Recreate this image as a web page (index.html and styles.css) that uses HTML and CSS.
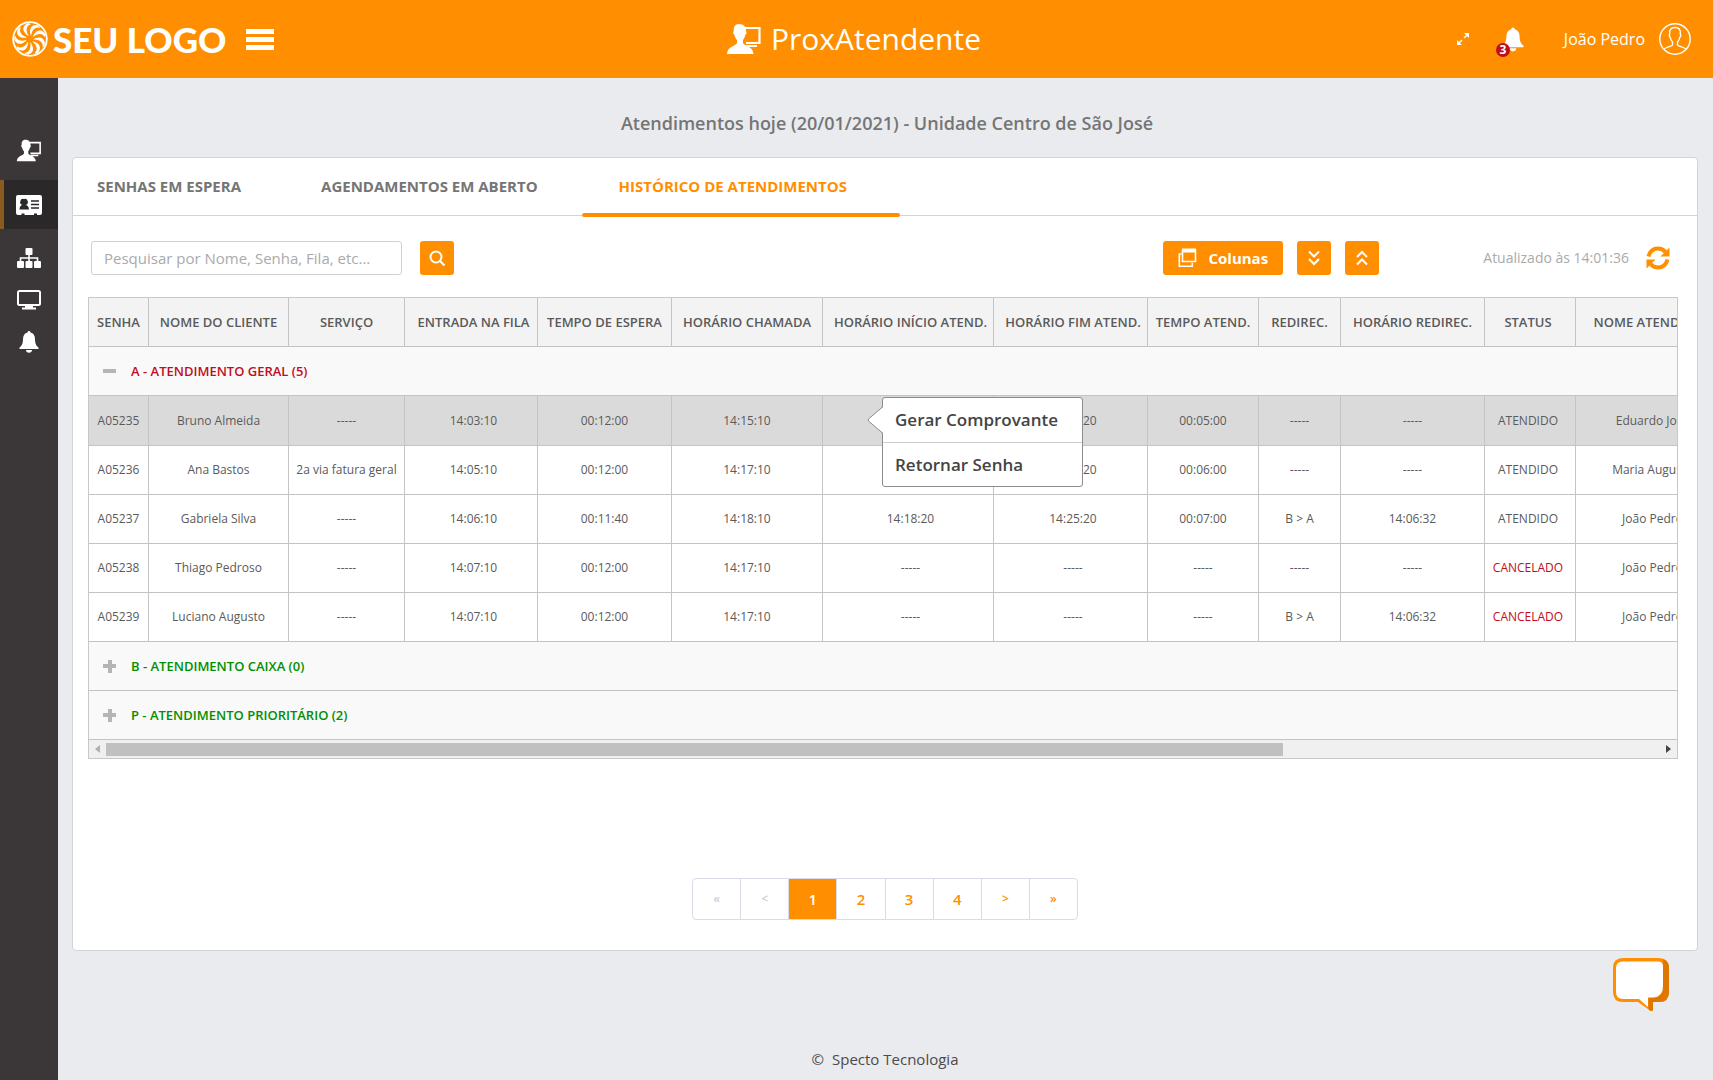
FILE: index.html
```html
<!DOCTYPE html>
<html lang="pt-BR">
<head>
<meta charset="utf-8">
<title>ProxAtendente</title>
<link rel="stylesheet" href="styles.css">
</head>
<body>
<svg class="defs" width="0" height="0" aria-hidden="true">
  <symbol id="agent" viewBox="0 0 36 32">
    <path d="M19 5h14.500v15H20" fill="none" stroke="currentColor" stroke-width="2.200"/>
    <path d="M20 22h11v2H22zM13 1c5 0 7 3 7 7 1 1 .6 3.500-.8 4-.5 3-1.700 4-2.200 5v3c1 3 10 3 10.500 11H1c.5-8 9-8 10-11v-3c-1-1-2-2.500-2.500-5-1.300-.5-1.700-3-.7-4C7.500 4 9 1 13 1z" fill="currentColor"/>
  </symbol>
  <symbol id="bell" viewBox="0 0 20 22">
    <path d="M10 0c.9 0 1.500.7 1.500 1.600C14.500 2.300 16 5 16 8c0 5 1.500 7 3.500 8.500V18H.5v-1.500C2.500 15 4 13 4 8c0-3 1.500-5.700 4.500-6.400C8.500.7 9.100 0 10 0zM7 19h6c0 1.700-1.300 2.800-3 2.800S7 20.700 7 19z" fill="currentColor"/>
  </symbol>
</svg>

<header class="topbar">
  <div class="brand">
    <svg class="brand-mark" viewBox="-18 -18 36 36" aria-hidden="true">
      <circle r="16.800" fill="none" stroke="#fff" stroke-width="1.800"/>
      <g fill="#fff">
        <path id="b" d="M1-3C-1-8 0-14 6-14 9-14 10-12 10-11 6-12.500 2-10 1-3z"/>
        <use href="#b" transform="rotate(40)"/><use href="#b" transform="rotate(80)"/><use href="#b" transform="rotate(120)"/><use href="#b" transform="rotate(160)"/><use href="#b" transform="rotate(200)"/><use href="#b" transform="rotate(240)"/><use href="#b" transform="rotate(280)"/><use href="#b" transform="rotate(320)"/>
      </g>
    </svg>
    <span class="brand-name">SEU LOGO</span>
    <button class="menu-btn" aria-label="Menu"><span></span><span></span><span></span></button>
  </div>
  <div class="product">
    <svg class="product-icon" aria-hidden="true"><use href="#agent"/></svg>
    <span>ProxAtendente</span>
  </div>
  <div class="user-area">
    <button class="icon-btn expand" aria-label="Tela cheia">
      <svg width="14" height="14" viewBox="0 0 14 14" aria-hidden="true"><path d="M8 1h5v5zM1 8v5h5z" fill="#fff"/><path d="M11 3 8 6M6 8l-3 3" stroke="#fff" stroke-width="1.600"/></svg>
    </button>
    <button class="icon-btn alerts" aria-label="Notificações">
      <svg width="22" height="25" aria-hidden="true"><use href="#bell"/></svg>
      <span class="badge">3</span>
    </button>
    <a class="user" href="#">
      <span>João Pedro</span>
      <svg width="32" height="32" viewBox="0 0 32 32" fill="none" stroke="#fff" stroke-width="1.400" aria-hidden="true"><circle cx="16" cy="16" r="15.200"/><path d="M5 26.500c1-2.500 7-2.500 8.500-4.500v-3c-1.500-1.500-2-3-2.200-4.500-1-.5-1.300-2.500-.6-3.500C10 7 12 4.500 16 4.500S22 7 21.300 11c.7 1 .4 3-.6 3.500-.2 1.500-.7 3-2.200 4.500v3c1.500 2 7.500 2 8.500 4.500"/></svg>
    </a>
  </div>
</header>

<div class="shell">
  <nav class="sidebar" aria-label="Principal">
    <a href="#" class="side-link first" aria-label="Atendente"><svg width="26" height="23" aria-hidden="true"><use href="#agent"/></svg></a>
    <a href="#" class="side-link active" aria-label="Atendimentos">
      <svg width="28" height="22" viewBox="0 0 28 22" aria-hidden="true"><path d="M3 1h22a2 2 0 0 1 2 2v16a2 2 0 0 1-2 2h-3v-1.500h-3V21H9.500v-1.500h-3V21H3a2 2 0 0 1-2-2V3a2 2 0 0 1 2-2z" fill="#fff"/><path d="M4.500 15.500c0-3 1.500-4.500 3-4.500A3 3 0 0 1 9 5a3 3 0 0 1 1.500 6c1.700 0 3.500 1.500 3.500 4.500z" fill="#2a2829"/><path d="M16 7h8M16 10.500h8M16 14h8" stroke="#2a2829" stroke-width="1.500"/></svg>
    </a>
    <a href="#" class="side-link spaced" aria-label="Filas">
      <svg width="26" height="22" viewBox="0 0 26 22" aria-hidden="true"><g fill="#fff"><rect x="9.500" y="1" width="7" height="7" rx="1"/><rect x="1" y="14" width="7" height="7" rx="1"/><rect x="9.500" y="14" width="7" height="7" rx="1"/><rect x="18" y="14" width="7" height="7" rx="1"/></g><path d="M13 7v8M4.500 15v-4h17v4" fill="none" stroke="#fff" stroke-width="1.600"/></svg>
    </a>
    <a href="#" class="side-link" aria-label="Painel">
      <svg width="26" height="22" viewBox="0 0 26 22" aria-hidden="true"><rect x="2" y="2" width="22" height="14" rx="1.500" fill="none" stroke="#fff" stroke-width="2"/><path d="M9 17h8v1.500h3v2H6v-2h3z" fill="#fff"/></svg>
    </a>
    <a href="#" class="side-link" aria-label="Alertas"><svg width="20" height="22" aria-hidden="true"><use href="#bell"/></svg></a>
  </nav>

  <main class="main">
    <h1 class="title">Atendimentos hoje (20/01/2021) - Unidade Centro de São José</h1>

    <section class="card">
      <div class="tabs">
        <a href="#" class="tab">SENHAS EM ESPERA</a>
        <a href="#" class="tab">AGENDAMENTOS EM ABERTO</a>
        <a href="#" class="tab selected" aria-current="page">HISTÓRICO DE ATENDIMENTOS</a>
      </div>

      <div class="toolbar">
        <input class="search" type="text" aria-label="Pesquisar" placeholder="Pesquisar por Nome, Senha, Fila, etc...">
        <button class="btn square" aria-label="Buscar"><svg width="18" height="18" viewBox="0 0 18 18" fill="none" stroke="#fff" stroke-width="2" aria-hidden="true"><circle cx="8" cy="8" r="5.500"/><path d="m12 12 4.500 4.500"/></svg></button>
        <div class="actions">
          <button class="btn columns"><svg width="19" height="20" viewBox="0 0 19 20" fill="none" stroke="#fff" aria-hidden="true"><path d="M4.500 2.500h13v11h-13z" stroke-width="1.600"/><path d="M4 2.500h14" stroke-width="4"/><path d="M3.500 6H1.300v12.300h13V15" stroke-width="1.600"/></svg><span>Colunas</span></button>
          <button class="btn square" aria-label="Expandir tudo"><svg width="14" height="16" viewBox="0 0 14 16" fill="none" stroke="#fff" stroke-width="2" aria-hidden="true"><path d="m2 1.500 5 5 5-5M2 9l5 5 5-5"/></svg></button>
          <button class="btn square" aria-label="Recolher tudo"><svg width="14" height="16" viewBox="0 0 14 16" fill="none" stroke="#fff" stroke-width="2" aria-hidden="true"><path d="m2 7 5-5 5 5M2 14.500l5-5 5 5"/></svg></button>
        </div>
        <div class="updated">
          <span>Atualizado às 14:01:36</span>
          <button class="icon-btn" aria-label="Atualizar"><svg width="24" height="24" viewBox="0 0 24 24" aria-hidden="true"><path d="M2.500 10.500C4 4.500 8 2.500 12 2.500c3 0 5.500 1.200 7.500 3.500M21.500 13.500C20 19.500 16 21.500 12 21.500c-3 0-5.500-1.200-7.500-3.500" fill="none" stroke="#ff8f00" stroke-width="4"/><path d="M23.500 1.500v9h-9zM.5 22.500v-9h9z" fill="#ff8f00"/></svg></button>
        </div>
      </div>

      <div class="grid">
        <div class="grid-view">
          <table class="table">
            <colgroup><col class="c-senha"><col class="c-nome"><col class="c-serv"><col class="c-entr"><col class="c-esp"><col class="c-cham"><col class="c-ini"><col class="c-fim"><col class="c-tempo"><col class="c-red"><col class="c-hred"><col class="c-stat"><col class="c-atd"></colgroup>
            <thead>
              <tr><th>SENHA</th><th>NOME DO CLIENTE</th><th>SERVIÇO</th><th>ENTRADA NA FILA</th><th>TEMPO DE ESPERA</th><th>HORÁRIO CHAMADA</th><th>HORÁRIO INÍCIO ATEND.</th><th>HORÁRIO FIM ATEND.</th><th>TEMPO ATEND.</th><th>REDIREC.</th><th>HORÁRIO REDIREC.</th><th>STATUS</th><th>NOME ATENDENTE</th></tr>
            </thead>
            <tbody>
              <tr class="group"><td colspan="13"><button class="group-btn open"><i class="sign minus"></i>A - ATENDIMENTO GERAL (5)</button></td></tr>
              <tr class="current"><td>A05235</td><td>Bruno Almeida</td><td>-----</td><td>14:03:10</td><td>00:12:00</td><td>14:15:10</td>
                <td class="anchor">14:15:20
                  <div class="popup" role="menu">
                    <svg class="popup-arrow" width="17" height="30" viewBox="0 0 17 30" aria-hidden="true"><path d="M16 1v1L1.500 14 Q.8 15 1.500 16L16 28v1z" fill="#fff"/><path d="M16 1.500 1.500 14Q.8 15 1.500 16L16 28.500" fill="none" stroke="#8c8c8c"/></svg>
                    <button role="menuitem">Gerar Comprovante</button>
                    <button role="menuitem">Retornar Senha</button>
                  </div>
                </td>
                <td>14:20:20</td><td>00:05:00</td><td>-----</td><td>-----</td><td>ATENDIDO</td><td>Eduardo José</td></tr>
              <tr><td>A05236</td><td>Ana Bastos</td><td>2a via fatura geral</td><td>14:05:10</td><td>00:12:00</td><td>14:17:10</td><td>14:17:20</td><td>14:23:20</td><td>00:06:00</td><td>-----</td><td>-----</td><td>ATENDIDO</td><td>Maria Augusta</td></tr>
              <tr><td>A05237</td><td>Gabriela Silva</td><td>-----</td><td>14:06:10</td><td>00:11:40</td><td>14:18:10</td><td>14:18:20</td><td>14:25:20</td><td>00:07:00</td><td>B &gt; A</td><td>14:06:32</td><td>ATENDIDO</td><td>João Pedro</td></tr>
              <tr><td>A05238</td><td>Thiago Pedroso</td><td>-----</td><td>14:07:10</td><td>00:12:00</td><td>14:17:10</td><td>-----</td><td>-----</td><td>-----</td><td>-----</td><td>-----</td><td class="cancelled">CANCELADO</td><td>João Pedro</td></tr>
              <tr><td>A05239</td><td>Luciano Augusto</td><td>-----</td><td>14:07:10</td><td>00:12:00</td><td>14:17:10</td><td>-----</td><td>-----</td><td>-----</td><td>B &gt; A</td><td>14:06:32</td><td class="cancelled">CANCELADO</td><td>João Pedro</td></tr>
              <tr class="group"><td colspan="13"><button class="group-btn"><i class="sign"></i>B - ATENDIMENTO CAIXA (0)</button></td></tr>
              <tr class="group"><td colspan="13"><button class="group-btn"><i class="sign"></i>P - ATENDIMENTO PRIORITÁRIO (2)</button></td></tr>
            </tbody>
          </table>
        </div>
        <div class="scroller" aria-hidden="true"><i class="arrow left"></i><div class="track"><div class="thumb"></div></div><i class="arrow right"></i></div>
      </div>

      <nav class="pager" aria-label="Paginação">
        <a class="off small">«</a><a class="off small">&lt;</a><a class="on" href="#">1</a><a href="#">2</a><a href="#">3</a><a href="#">4</a><a class="small" href="#">&gt;</a><a class="small" href="#">»</a>
      </nav>
    </section>

    <footer class="footer"><span>©</span><span>Specto Tecnologia</span></footer>
    <button class="chat" aria-label="Chat">
      <svg width="56" height="54" viewBox="0 0 56 54" aria-hidden="true"><path d="M10 0h36q10 0 10 10v24q0 10-10 10h-6v7q0 3-3 1.500L25 44H10Q0 44 0 34V10Q0 0 10 0z" fill="#ff8f00"/><path d="M50 1q6 3 6 9v24q0 10-10 10h-6v7q0 3-3 1.500L35.500 51V39.500H40q10 0 10-10z" fill="#df7600"/><path d="M10 3.500h35q5 0 5 5V28q0 11-10 11.500h-5V49L26 41H10q-7 0-7-7V10q0-6.500 7-6.500z" fill="#fff"/></svg>
    </button>
  </main>
</div>
</body>
</html>
```
FILE: styles.css
```css
* { box-sizing: border-box; }
body {
  margin: 0;
  min-height: 100vh;
  display: flex;
  flex-direction: column;
  background: #eaebef;
  color: #5a5a5a;
  font: 14px/20px "Open Sans", "Noto Sans", sans-serif;
}
button { font: inherit; color: inherit; border: 0; background: none; padding: 0; cursor: pointer; }
a { color: inherit; text-decoration: none; }
svg { display: block; }
.defs { position: absolute; }

.topbar {
  display: grid;
  grid-template-columns: 1fr auto 1fr;
  align-items: center;
  height: 78px;
  padding: 0 22px 0 12px;
  background: #ff8f00;
  color: #fff;
}
.brand { display: flex; align-items: center; }
.brand-mark { width: 36px; height: 36px; }
.brand-name { margin-left: 5px; font: 900 35px/40px Lato, sans-serif; }
.menu-btn { display: grid; gap: 3px; width: 28px; margin-left: 20px; }
.menu-btn span { height: 5px; background: #fff; }
.product { display: flex; align-items: center; gap: 9px; padding-left: 4px; font-size: 30px; line-height: 40px; }
.product-icon { width: 36px; height: 32px; }
.user-area { display: flex; align-items: center; justify-content: flex-end; }
.alerts { position: relative; margin-left: 32px; }
.badge {
  position: absolute;
  left: -6px;
  top: 16px;
  width: 14px;
  height: 14px;
  border-radius: 50%;
  background: #c20d1c;
  font-size: 12px;
  font-weight: 700;
  line-height: 14px;
}
.user { display: flex; align-items: center; gap: 14px; margin-left: 40px; font-size: 16px; }

.shell { flex: 1; display: flex; }
.sidebar {
  flex: none;
  width: 58px;
  padding-top: 42px;
  background: #3b3738;
  color: #fff;
}
.side-link { display: flex; align-items: center; justify-content: center; height: 42px; }
.side-link.first { height: 60px; }
.side-link.active { height: 49px; background: #2a2829; box-shadow: inset 4px 0 #8a5a1e; }
.side-link.spaced { margin-top: 8px; }

.main {
  position: relative;
  flex: 1;
  min-width: 0;
  display: flex;
  flex-direction: column;
  padding: 0 15px 11px 14px;
}
.title { margin: 33px 0 22px; padding-left: 4px; color: #757575; font-size: 18px; font-weight: 600; line-height: 24px; text-align: center; }

.card { border: 1px solid #d3d4d6; border-radius: 4px; background: #fff; padding-bottom: 30px; }
.tabs { display: flex; height: 58px; padding-left: 24px; border-bottom: 1px solid #d3d3d3; color: #757575; font-size: 15px; font-weight: 700; line-height: 56px; }
.tab { margin-right: 80px; }
.tab.selected { position: relative; margin: 0 0 0 -36px; padding: 0 53px 0 37px; color: #ff8f00; }
.tab.selected::after { content: ""; position: absolute; left: 0; right: 0; bottom: -2px; height: 4px; border-radius: 2px; background: #ff8f00; }

.toolbar { display: flex; align-items: center; padding: 25px 27px 22px 18px; }
.search { width: 311px; height: 34px; margin-right: 18px; padding: 0 12px; border: 1px solid #d0d0d0; border-radius: 3px; font: inherit; font-size: 15px; }
.search::placeholder { color: #aaa; opacity: 1; }
.btn { display: flex; align-items: center; justify-content: center; height: 34px; border-radius: 3px; background: #ff8f00; color: #fff; font-size: 15px; font-weight: 700; }
.square { width: 34px; }
.columns { width: 120px; gap: 11px; }
.actions { display: flex; gap: 14px; margin-left: auto; }
.updated { display: flex; align-items: center; gap: 17px; margin-left: 104px; color: #aaa; }

.grid { margin: 0 19px 0 15px; border: 1px solid #c8c8c8; }
.grid-view { overflow: hidden; }
.table { table-layout: fixed; width: 1645px; border-spacing: 0; font-size: 12px; line-height: 16px; }
.c-senha { width: 60px; }
.c-nome { width: 140px; }
.c-serv { width: 116px; }
.c-entr { width: 133px; }
.c-esp { width: 134px; }
.c-cham { width: 151px; }
.c-ini { width: 171px; }
.c-fim { width: 154px; }
.c-tempo { width: 111px; }
.c-red { width: 82px; }
.c-hred { width: 144px; }
.c-stat { width: 91px; }
.c-atd { width: 158px; }
.table th, .table td { height: 49px; padding: 0; border: solid #c4c4c4; border-width: 0 1px 1px 0; text-align: center; white-space: nowrap; }
.table th { background: #f3f3f3; font-size: 13px; font-weight: 600; }
.table tr > :nth-child(4), .table tr > :nth-child(7), .table tr > :nth-child(8) { padding-left: 5px; }
.table tr > :nth-child(12), .table tr > :nth-child(13) { padding-right: 4px; }
.table .current td { height: 50px; background: #dadada; }
.table .cancelled { color: #c20d1c; }
.table .group td { background: #f9f9f9; text-align: left; }
.group-btn { display: flex; align-items: center; gap: 15px; padding-left: 14px; color: #009000; font-size: 13px; font-weight: 600; }
.group-btn.open { color: #c20d1c; }
.sign { width: 13px; height: 13px; background: linear-gradient(#b5b5b5, #b5b5b5) center / 13px 4px no-repeat, linear-gradient(#b5b5b5, #b5b5b5) center / 4px 13px no-repeat; }
.sign.minus { background: linear-gradient(#b5b5b5, #b5b5b5) center / 13px 4px no-repeat; }
.table .anchor { position: relative; }

.popup { position: absolute; z-index: 2; left: 59px; top: 1px; width: 201px; border: 1px solid #8c8c8c; border-radius: 3px; background: #fff; color: #444; }
.popup button { display: block; width: 100%; height: 44px; padding-left: 12px; font-size: 17px; font-weight: 600; text-align: left; }
.popup button + button { border-top: 1px solid #ccc; }
.popup-arrow { position: absolute; left: -16px; top: 7px; }

.scroller { display: flex; align-items: center; height: 18px; background: #f0f0f0; }
.track { flex: 1; height: 13px; }
.thumb { width: 76%; max-width: 1177px; height: 13px; background: #c0c0c0; }
.arrow { width: 17px; height: 8px; background: #b0b0b0; clip-path: polygon(6px 4px, 11px 0, 11px 8px); }
.arrow.right { background: #444; clip-path: polygon(11px 4px, 6px 0, 6px 8px); }

.pager { display: flex; width: 386px; height: 42px; margin: 119px auto 0; border: 1px solid #d9dce6; border-radius: 4px; overflow: hidden; color: #ff8f00; font-size: 15px; font-weight: 600; line-height: 40px; }
.pager a { flex: 1; text-align: center; }
.pager a + a { border-left: 1px solid #d9dce6; }
.pager .small { font-size: 12px; }
.pager .off { color: #c9cfdd; }
.pager .on { background: #ff8f00; color: #fff; }

.footer { display: flex; justify-content: center; gap: 8px; margin-top: auto; color: #4a4a4a; font-size: 15px; }
.chat { position: absolute; right: 44px; bottom: 68px; }
```
